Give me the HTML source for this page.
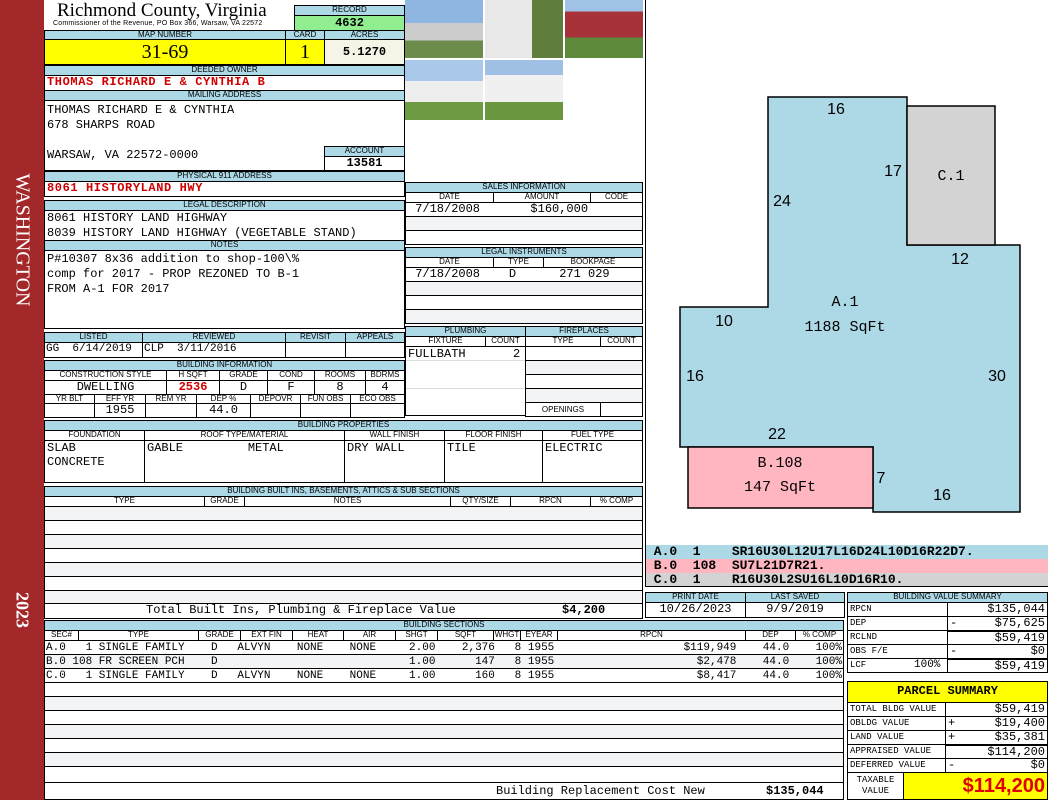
<!DOCTYPE html><html><head><meta charset="utf-8"><style>
*{margin:0;padding:0;box-sizing:border-box}
body{width:1050px;height:800px;position:relative;background:#fff;overflow:hidden;font-family:"Liberation Mono",monospace;font-size:12px;color:#000}
div{position:absolute}
.h{background:#add8e6;border:1px solid #000;font:8px "Liberation Sans",sans-serif;text-align:center;line-height:8px;white-space:nowrap;overflow:hidden}
.b{border:1px solid #000;white-space:nowrap;overflow:hidden;line-height:13px;padding:0 2px}
.r{color:#d00000;font-weight:bold}
.lt{background:#f2f4f6}
.ctr{text-align:center}.rt{text-align:right}
</style></head><body>
<div style="left:0;top:0;width:44px;height:800px;background:#a3282a"></div>
<div style="left:22px;top:240px;transform:translate(-50%,-50%) rotate(90deg);color:#fff;font:20px 'Liberation Serif',serif;white-space:nowrap">WASHINGTON</div>
<div style="left:22px;top:610px;transform:translate(-50%,-50%) rotate(90deg);color:#fff;font:bold 18px 'Liberation Serif',serif">2023</div>

<div style="left:57px;top:1px;font:19px 'Liberation Serif',serif;line-height:20px">Richmond County, Virginia</div>
<div style="left:53px;top:20px;font:7px 'Liberation Sans',sans-serif;letter-spacing:0.2px">Commissioner of the Revenue, PO Box 366, Warsaw, VA 22572</div>
<div class="h" style="left:294px;top:5px;width:111px;height:11px">RECORD</div>
<div class="b ctr" style="left:294px;top:15px;width:111px;height:16px;background:#90ee90;font-weight:bold;font-size:12px;line-height:14px">4632</div>
<div class="h" style="left:44px;top:30px;width:242px;height:10px">MAP NUMBER</div>
<div class="h" style="left:285px;top:30px;width:40px;height:10px">CARD</div>
<div class="h" style="left:324px;top:30px;width:81px;height:10px">ACRES</div>
<div class="b ctr" style="left:44px;top:39px;width:242px;height:26px;background:#ffff00;font:20px 'Liberation Serif',serif;line-height:24px">31-69</div>
<div class="b ctr" style="left:285px;top:39px;width:40px;height:26px;background:#ffff00;font:20px 'Liberation Serif',serif;line-height:24px">1</div>
<div class="b ctr" style="left:324px;top:39px;width:81px;height:26px;background:#f6f4e6;font-weight:bold;font-size:12px;line-height:24px">5.1270</div>
<div class="h" style="left:44px;top:65px;width:361px;height:11px">DEEDED OWNER</div>
<div class="b r" style="left:44px;top:75px;width:361px;height:16px;font-size:12px;letter-spacing:0.6px">THOMAS RICHARD E &amp; CYNTHIA B</div>
<div class="h" style="left:44px;top:90px;width:361px;height:11px">MAILING ADDRESS</div>
<div class="b" style="left:44px;top:100px;width:361px;height:71px;line-height:15px;padding-top:2px">THOMAS RICHARD E &amp; CYNTHIA<br>678 SHARPS ROAD<br><br>WARSAW, VA 22572-0000</div>
<div class="h" style="left:324px;top:146px;width:81px;height:11px">ACCOUNT</div>
<div class="b ctr" style="left:324px;top:156px;width:81px;height:15px;font-weight:bold;font-size:12px;background:#fff">13581</div>
<div class="h" style="left:44px;top:171px;width:361px;height:11px">PHYSICAL 911 ADDRESS</div>
<div class="b r" style="left:44px;top:181px;width:361px;height:16px;font-size:12px;letter-spacing:0.6px">8061 HISTORYLAND HWY</div>
<div class="h" style="left:44px;top:200px;width:361px;height:11px">LEGAL DESCRIPTION</div>
<div class="b" style="left:44px;top:210px;width:361px;height:31px;line-height:15px">8061 HISTORY LAND HIGHWAY<br>8039 HISTORY LAND HIGHWAY (VEGETABLE STAND)</div>
<div class="h" style="left:44px;top:240px;width:361px;height:11px">NOTES</div>
<div class="b" style="left:44px;top:250px;width:361px;height:79px;line-height:15px;padding-top:1px">P#10307 8x36 addition to shop-100\%<br>comp for 2017 - PROP REZONED TO B-1<br>FROM A-1 FOR 2017</div>

<div style="left:405px;top:0;width:78px;height:58px;background:linear-gradient(#8fb6e0 0 40%,#ccc 40% 70%,#6c8c4c 70%)"></div>
<div style="left:485px;top:0;width:78px;height:58px;background:linear-gradient(90deg,#e8e8e8 0 60%,#5f7d3c 60%)"></div>
<div style="left:565px;top:0;width:78px;height:58px;background:linear-gradient(#9fc2e6 0 20%,#a8323a 20% 65%,#5d8a3a 65%)"></div>
<div style="left:405px;top:60px;width:78px;height:60px;background:linear-gradient(#a9c8ea 0 35%,#eee 35% 70%,#6f9a44 70%)"></div>
<div style="left:485px;top:60px;width:78px;height:60px;background:linear-gradient(#9fc0e4 0 25%,#f0f0f0 25% 70%,#6a9640 70%)"></div>

<div class="h" style="left:405px;top:182px;width:238px;height:11px">SALES INFORMATION</div>
<div class="h" style="left:405px;top:192px;width:89px;height:11px;background:#fff">DATE</div>
<div class="h" style="left:493px;top:192px;width:98px;height:11px;background:#fff">AMOUNT</div>
<div class="h" style="left:590px;top:192px;width:53px;height:11px;background:#fff">CODE</div>
<div class="b" style="left:405px;top:202px;width:238px;height:15px">&nbsp;7/18/2008&nbsp;&nbsp;&nbsp;&nbsp;&nbsp;&nbsp;&nbsp;$160,000</div>
<div class="b lt" style="left:405px;top:216px;width:238px;height:15px"></div>
<div class="b" style="left:405px;top:230px;width:238px;height:15px"></div>
<div class="h" style="left:405px;top:247px;width:238px;height:11px">LEGAL INSTRUMENTS</div>
<div class="h" style="left:405px;top:257px;width:89px;height:11px;background:#fff">DATE</div>
<div class="h" style="left:493px;top:257px;width:51px;height:11px;background:#fff">TYPE</div>
<div class="h" style="left:543px;top:257px;width:100px;height:11px;background:#fff">BOOKPAGE</div>
<div class="b" style="left:405px;top:267px;width:238px;height:15px">&nbsp;7/18/2008&nbsp;&nbsp;&nbsp;&nbsp;D&nbsp;&nbsp;&nbsp;&nbsp;&nbsp;&nbsp;271 029</div>
<div class="b lt" style="left:405px;top:281px;width:238px;height:15px"></div>
<div class="b" style="left:405px;top:295px;width:238px;height:15px"></div>
<div class="b lt" style="left:405px;top:309px;width:238px;height:15px"></div>

<div class="h" style="left:405px;top:326px;width:121px;height:11px">PLUMBING</div>
<div class="h" style="left:525px;top:326px;width:118px;height:11px">FIREPLACES</div>
<div class="h" style="left:405px;top:336px;width:81px;height:11px;background:#fff">FIXTURE</div>
<div class="h" style="left:485px;top:336px;width:41px;height:11px;background:#fff">COUNT</div>
<div class="h" style="left:525px;top:336px;width:76px;height:11px;background:#fff">TYPE</div>
<div class="h" style="left:600px;top:336px;width:43px;height:11px;background:#fff">COUNT</div>
<div class="b" style="left:405px;top:346px;width:121px;height:70px;padding-top:1px">FULLBATH<span style="position:absolute;left:107px">2</span></div>
<div class="b" style="left:525px;top:346px;width:118px;height:15px"></div>
<div class="b lt" style="left:525px;top:360px;width:118px;height:15px"></div>
<div class="b" style="left:525px;top:374px;width:118px;height:15px"></div>
<div class="b lt" style="left:525px;top:388px;width:118px;height:15px"></div>
<div class="h" style="left:525px;top:402px;width:76px;height:15px;background:#fff;line-height:13px">OPENINGS</div>
<div class="b" style="left:600px;top:402px;width:43px;height:15px"></div>
<div style="left:406px;top:360px;width:119px;height:1px;background:#ddd"></div>
<div style="left:406px;top:388px;width:119px;height:1px;background:#ddd"></div>

<div class="h" style="left:44px;top:332px;width:99px;height:11px">LISTED</div>
<div class="h" style="left:142px;top:332px;width:144px;height:11px">REVIEWED</div>
<div class="h" style="left:285px;top:332px;width:61px;height:11px">REVISIT</div>
<div class="h" style="left:345px;top:332px;width:60px;height:11px">APPEALS</div>
<div class="b" style="left:44px;top:342px;width:99px;height:16px;font-size:11px;padding:0 1px">GG&nbsp;&nbsp;6/14/2019</div>
<div class="b" style="left:142px;top:342px;width:144px;height:16px;font-size:11px;padding:0 1px">CLP&nbsp;&nbsp;3/11/2016</div>
<div class="b" style="left:285px;top:342px;width:61px;height:16px"></div>
<div class="b" style="left:345px;top:342px;width:60px;height:16px"></div>

<div class="h" style="left:44px;top:360px;width:361px;height:11px">BUILDING INFORMATION</div>
<div class="h" style="left:44px;top:370px;width:123px;height:11px;background:#fff">CONSTRUCTION STYLE</div>
<div class="h" style="left:166px;top:370px;width:54px;height:11px;background:#fff">H SQFT</div>
<div class="h" style="left:219px;top:370px;width:49px;height:11px;background:#fff">GRADE</div>
<div class="h" style="left:267px;top:370px;width:48px;height:11px;background:#fff">COND</div>
<div class="h" style="left:314px;top:370px;width:52px;height:11px;background:#fff">ROOMS</div>
<div class="h" style="left:365px;top:370px;width:40px;height:11px;background:#fff">BDRMS</div>
<div class="b ctr" style="left:44px;top:380px;width:123px;height:15px">DWELLING</div>
<div class="b ctr r" style="left:166px;top:380px;width:54px;height:15px;font-size:12px">2536</div>
<div class="b ctr" style="left:219px;top:380px;width:49px;height:15px">D</div>
<div class="b ctr" style="left:267px;top:380px;width:48px;height:15px">F</div>
<div class="b ctr" style="left:314px;top:380px;width:52px;height:15px">8</div>
<div class="b ctr" style="left:365px;top:380px;width:40px;height:15px">4</div>
<div class="h" style="left:44px;top:394px;width:51px;height:10px;background:#fff">YR BLT</div>
<div class="h" style="left:94px;top:394px;width:52px;height:10px;background:#fff">EFF YR</div>
<div class="h" style="left:145px;top:394px;width:52px;height:10px;background:#fff">REM YR</div>
<div class="h" style="left:196px;top:394px;width:55px;height:10px;background:#fff">DEP %</div>
<div class="h" style="left:250px;top:394px;width:51px;height:10px;background:#fff">DEPOVR</div>
<div class="h" style="left:300px;top:394px;width:51px;height:10px;background:#fff">FUN OBS</div>
<div class="h" style="left:350px;top:394px;width:55px;height:10px;background:#fff">ECO OBS</div>
<div class="b" style="left:44px;top:403px;width:51px;height:15px"></div>
<div class="b ctr" style="left:94px;top:403px;width:52px;height:15px">1955</div>
<div class="b" style="left:145px;top:403px;width:52px;height:15px"></div>
<div class="b ctr" style="left:196px;top:403px;width:55px;height:15px">44.0</div>
<div class="b" style="left:250px;top:403px;width:51px;height:15px"></div>
<div class="b" style="left:300px;top:403px;width:51px;height:15px"></div>
<div class="b" style="left:350px;top:403px;width:55px;height:15px"></div>

<div class="h" style="left:44px;top:420px;width:599px;height:11px">BUILDING PROPERTIES</div>
<div class="h" style="left:44px;top:430px;width:101px;height:11px;background:#fff">FOUNDATION</div>
<div class="h" style="left:144px;top:430px;width:201px;height:11px;background:#fff">ROOF TYPE/MATERIAL</div>
<div class="h" style="left:344px;top:430px;width:101px;height:11px;background:#fff">WALL FINISH</div>
<div class="h" style="left:444px;top:430px;width:99px;height:11px;background:#fff">FLOOR FINISH</div>
<div class="h" style="left:542px;top:430px;width:101px;height:11px;background:#fff">FUEL TYPE</div>
<div class="b" style="left:44px;top:440px;width:101px;height:43px;line-height:14px">SLAB<br>CONCRETE</div>
<div class="b" style="left:144px;top:440px;width:201px;height:43px;line-height:14px">GABLE&nbsp;&nbsp;&nbsp;&nbsp;&nbsp;&nbsp;&nbsp;&nbsp;&nbsp;METAL</div>
<div class="b" style="left:344px;top:440px;width:101px;height:43px;line-height:14px">DRY WALL</div>
<div class="b" style="left:444px;top:440px;width:99px;height:43px;line-height:14px">TILE</div>
<div class="b" style="left:542px;top:440px;width:101px;height:43px;line-height:14px">ELECTRIC</div>

<div class="h" style="left:44px;top:486px;width:599px;height:11px">BUILDING BUILT INS, BASEMENTS, ATTICS &amp; SUB SECTIONS</div>
<div class="h" style="left:44px;top:496px;width:161px;height:11px;background:#fff">TYPE</div>
<div class="h" style="left:204px;top:496px;width:41px;height:11px;background:#fff">GRADE</div>
<div class="h" style="left:244px;top:496px;width:207px;height:11px;background:#fff">NOTES</div>
<div class="h" style="left:450px;top:496px;width:61px;height:11px;background:#fff">QTY/SIZE</div>
<div class="h" style="left:510px;top:496px;width:81px;height:11px;background:#fff">RPCN</div>
<div class="h" style="left:590px;top:496px;width:53px;height:11px;background:#fff">% COMP</div>
<div class="b lt" style="left:44px;top:506px;width:599px;height:15px"></div>
<div class="b" style="left:44px;top:520px;width:599px;height:15px"></div>
<div class="b lt" style="left:44px;top:534px;width:599px;height:15px"></div>
<div class="b" style="left:44px;top:548px;width:599px;height:15px"></div>
<div class="b lt" style="left:44px;top:562px;width:599px;height:15px"></div>
<div class="b" style="left:44px;top:576px;width:599px;height:15px"></div>
<div class="b lt" style="left:44px;top:590px;width:599px;height:14px"></div>
<div class="b" style="left:44px;top:603px;width:599px;height:16px;font-size:12px">
<span style="position:absolute;left:101px">Total Built Ins, Plumbing &amp; Fireplace Value</span><span style="position:absolute;left:517px;font-weight:bold">$4,200</span></div>

<div class="h" style="left:44px;top:620px;width:800px;height:11px">BUILDING SECTIONS</div>
<div class="h" style="left:44px;top:630px;width:35px;height:11px;background:#fff">SEC#</div>
<div class="h" style="left:78px;top:630px;width:121px;height:11px;background:#fff">TYPE</div>
<div class="h" style="left:198px;top:630px;width:43px;height:11px;background:#fff">GRADE</div>
<div class="h" style="left:240px;top:630px;width:53px;height:11px;background:#fff">EXT FIN</div>
<div class="h" style="left:292px;top:630px;width:52px;height:11px;background:#fff">HEAT</div>
<div class="h" style="left:343px;top:630px;width:53px;height:11px;background:#fff">AIR</div>
<div class="h" style="left:395px;top:630px;width:43px;height:11px;background:#fff">SHGT</div>
<div class="h" style="left:437px;top:630px;width:57px;height:11px;background:#fff">SQFT</div>
<div class="h" style="left:493px;top:630px;width:28px;height:11px;background:#fff">WHGT</div>
<div class="h" style="left:520px;top:630px;width:38px;height:11px;background:#fff">EYEAR</div>
<div class="h" style="left:557px;top:630px;width:189px;height:11px;background:#fff">RPCN</div>
<div class="h" style="left:745px;top:630px;width:51px;height:11px;background:#fff">DEP</div>
<div class="h" style="left:795px;top:630px;width:49px;height:11px;background:#fff">% COMP</div>
<div class="b" style="left:44px;top:640px;width:800px;height:15px"></div>
<div class="b lt" style="left:44px;top:654px;width:800px;height:15px"></div>
<div class="b" style="left:44px;top:668px;width:800px;height:15px"></div>
<div style="left:46px;top:641px;line-height:14px;white-space:pre;font-size:11px">A.0   1 SINGLE FAMILY    D   ALVYN    NONE    NONE     2.00    2,376   8 1955
B.0 108 FR SCREEN PCH    D                             1.00      147   8 1955
C.0   1 SINGLE FAMILY    D   ALVYN    NONE    NONE     1.00      160   8 1955</div>
<div style="left:640px;top:641px;line-height:14px;white-space:pre;text-align:right;width:202px;font-size:11px">$119,949    44.0    100%
  $2,478    44.0    100%
  $8,417    44.0    100%</div>
<div class="b" style="left:44px;top:682px;width:800px;height:15px"></div>
<div class="b lt" style="left:44px;top:696px;width:800px;height:15px"></div>
<div class="b" style="left:44px;top:710px;width:800px;height:15px"></div>
<div class="b lt" style="left:44px;top:724px;width:800px;height:15px"></div>
<div class="b" style="left:44px;top:738px;width:800px;height:15px"></div>
<div class="b lt" style="left:44px;top:752px;width:800px;height:15px"></div>
<div class="b" style="left:44px;top:766px;width:800px;height:17px"></div>
<div class="b" style="left:44px;top:782px;width:800px;height:18px;font-size:12px;line-height:16px"><span style="position:absolute;left:451px">Building Replacement Cost New</span><span style="position:absolute;left:721px;font-weight:bold">$135,044</span></div>

<svg style="position:absolute;left:645px;top:0" width="405" height="545" viewBox="645 0 405 545">
<polygon points="768,97 907,97 907,245 1020,245 1020,512 873,512 873,447 680,447 680,307 768,307" fill="#add8e6" stroke="#000" stroke-width="1.5"/>
<rect x="907" y="106" width="88" height="139" fill="#d3d3d3" stroke="#000" stroke-width="1.5"/>
<rect x="688" y="447" width="185" height="61" fill="#ffb6c1" stroke="#000" stroke-width="1.5"/>
<g font-family="Liberation Sans,sans-serif" font-size="16" text-anchor="middle">
<text x="836" y="114">16</text><text x="893" y="176">17</text><text x="782" y="206">24</text>
<text x="960" y="264">12</text><text x="724" y="326">10</text><text x="695" y="381">16</text>
<text x="997" y="381">30</text><text x="777" y="439">22</text><text x="881" y="483">7</text><text x="942" y="500">16</text></g>
<g font-family="Liberation Mono,monospace" font-size="15" text-anchor="middle">
<text x="951" y="180">C.1</text><text x="845" y="306">A.1</text><text x="845" y="331">1188 SqFt</text>
<text x="780" y="467">B.108</text><text x="780" y="491">147 SqFt</text></g>
</svg>
<div style="left:645px;top:0;width:1px;height:545px;background:#000"></div>
<div style="left:645px;top:545px;width:403px;height:14px;background:#add8e6;font-size:13px;line-height:14px;font-weight:bold;white-space:pre;border-left:1px solid #000"> A.0  1    SR16U30L12U17L16D24L10D16R22D7.</div>
<div style="left:645px;top:559px;width:403px;height:14px;background:#ffb6c1;font-size:13px;line-height:14px;font-weight:bold;white-space:pre;border-left:1px solid #000"> B.0  108  SU7L21D7R21.</div>
<div style="left:645px;top:573px;width:403px;height:14px;background:#d3d3d3;font-size:13px;line-height:14px;font-weight:bold;white-space:pre;border-left:1px solid #000;border-bottom:1px solid #000"> C.0  1    R16U30L2SU16L10D16R10.</div>

<div class="h" style="left:645px;top:592px;width:101px;height:11px">PRINT DATE</div>
<div class="h" style="left:745px;top:592px;width:100px;height:11px">LAST SAVED</div>
<div class="b ctr" style="left:645px;top:602px;width:101px;height:16px;font-size:12px">10/26/2023</div>
<div class="b ctr" style="left:745px;top:602px;width:100px;height:16px;font-size:12px">9/9/2019</div>

<div class="h" style="left:847px;top:592px;width:201px;height:11px">BUILDING VALUE SUMMARY</div>
<div class="b" style="left:847px;top:602px;width:101px;height:15px;font-size:9px">RPCN</div><div class="b rt" style="left:947px;top:602px;width:101px;height:15px;font-size:12px">$135,044</div>
<div class="b" style="left:847px;top:616px;width:101px;height:15px;font-size:9px">DEP</div><div class="b rt" style="left:947px;top:616px;width:101px;height:15px;font-size:12px"><span style="float:left">-</span>$75,625</div>
<div class="b" style="left:847px;top:630px;width:101px;height:15px;font-size:9px">RCLND</div><div class="b rt" style="left:947px;top:630px;width:101px;height:15px;font-size:12px;border-top:2px solid #000">$59,419</div>
<div class="b" style="left:847px;top:644px;width:101px;height:15px;font-size:9px">OBS F/E</div><div class="b rt" style="left:947px;top:644px;width:101px;height:15px;font-size:12px"><span style="float:left">-</span>$0</div>
<div class="b" style="left:847px;top:658px;width:101px;height:15px;font-size:9px">LCF<span style="position:absolute;left:66px;font-size:11px">100%</span></div><div class="b rt" style="left:947px;top:658px;width:101px;height:15px;font-size:12px;border-top:2px solid #000">$59,419</div>

<div class="b ctr" style="left:847px;top:681px;width:201px;height:22px;background:#ffff00;font-weight:bold;font-size:12px;line-height:19px">PARCEL SUMMARY</div>
<div class="b" style="left:847px;top:702px;width:99px;height:15px;font-size:9px">TOTAL BLDG VALUE</div><div class="b rt" style="left:945px;top:702px;width:103px;height:15px;font-size:12px">$59,419</div>
<div class="b" style="left:847px;top:716px;width:99px;height:15px;font-size:9px">OBLDG VALUE</div><div class="b rt" style="left:945px;top:716px;width:103px;height:15px;font-size:12px"><span style="float:left">+</span>$19,400</div>
<div class="b" style="left:847px;top:730px;width:99px;height:15px;font-size:9px">LAND VALUE</div><div class="b rt" style="left:945px;top:730px;width:103px;height:15px;font-size:12px"><span style="float:left">+</span>$35,381</div>
<div class="b" style="left:847px;top:744px;width:99px;height:15px;font-size:9px">APPRAISED VALUE</div><div class="b rt" style="left:945px;top:744px;width:103px;height:15px;font-size:12px;border-top:2px solid #000">$114,200</div>
<div class="b" style="left:847px;top:758px;width:99px;height:15px;font-size:9px">DEFERRED VALUE</div><div class="b rt" style="left:945px;top:758px;width:103px;height:15px;font-size:12px"><span style="float:left">-</span>$0</div>
<div class="b ctr" style="left:847px;top:772px;width:57px;height:28px;font-size:9px;line-height:11px;padding-top:2px">TAXABLE<br>VALUE</div>
<div class="b rt" style="left:903px;top:772px;width:145px;height:28px;background:#ffff00;color:#e00000;font:bold 20px 'Liberation Sans',sans-serif;line-height:26px">$114,200</div>
</body></html>
